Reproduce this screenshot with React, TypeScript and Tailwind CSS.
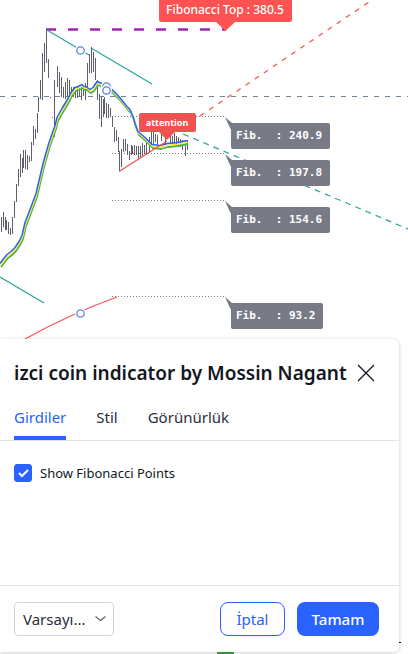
import React, { useState } from "react";

const candles: number[][] = [
  [1, 217, 232], [3, 212, 227], [5, 217, 230], [6, 220, 230], [8, 222, 234], [10, 228, 235], [12, 217, 234],
  [14, 201, 218], [16, 184, 202], [18, 169, 186], [20, 154, 177], [22, 158, 173], [23, 150, 168], [25, 150, 169],
  [27, 155, 170], [29, 156, 162], [31, 142, 161], [33, 126, 145], [35, 129, 139], [37, 113, 133], [38, 97, 112],
  [40, 80, 99], [42, 53, 100], [44, 43, 72], [46, 30, 63], [48, 59, 78], [50, 97, 98], [52, 117, 118], [54, 80, 137],
  [57, 66, 87], [59, 72, 93], [61, 77, 97], [63, 87, 98], [65, 82, 99], [67, 78, 97], [69, 80, 100], [71, 87, 98],
  [73, 87, 97], [75, 89, 98], [77, 87, 98], [79, 88, 97], [81, 86, 100], [83, 87, 96], [85, 83, 100], [87, 63, 90],
  [89, 54, 73], [91, 47, 73], [93, 52, 72], [95, 58, 80], [97, 80, 100], [99, 94, 119], [101, 97, 127],
  [103, 99, 117], [104, 97, 114], [106, 103, 118], [108, 104, 118], [110, 108, 117], [112, 117, 127],
  [114, 127, 142], [116, 130, 141], [118, 137, 152], [119, 151, 171], [121, 149, 167], [123, 139, 152],
  [125, 139, 151], [127, 144, 155], [129, 151, 160], [131, 145, 155], [132, 146, 154], [134, 145, 155],
  [136, 146, 155], [138, 146, 159], [140, 146, 158], [142, 143, 157], [144, 145, 154], [146, 143, 154],
  [149, 137, 153], [151, 132, 147], [153, 132, 145], [155, 134, 142], [157, 135, 145], [161, 134, 141],
  [165, 136, 146], [170, 134, 144], [172, 136, 145], [174, 133, 145], [176, 136, 147], [178, 137, 145],
  [180, 139, 147], [182, 140, 150], [185, 140, 156], [187, 140, 150],
];

const average =
  "M0 263 L3 259 L7 254 L11 251 L15 247 L19 241 L22 235 L25 222 L30 209 L36 193 L43 163 L49 142 L55 125 L57 117 L62 108 L65 103 L68 98 L71 92 L75 87 L78 86 L82 84 L84 86 L86 86 L90 89 L93 87 L97 81 L102 83 L107 86 L112 89 L118 95 L123 101 L127 106 L130 109 L133 116 L135 123 L138 131 L145 137 L152 144 L160 145 L167 143 L177 142 L187 140";

const levels = [
  { y: 117, start: 112, box: 123, width: 99, text: "Fib.  : 240.9" },
  { y: 154, start: 112, box: 160, width: 99, text: "Fib.  : 197.8" },
  { y: 201, start: 112, box: 207, width: 99, text: "Fib.  : 154.6" },
  { y: 297, start: 112, box: 303, width: 92, text: "Fib.  : 93.2" },
];

const handles = [[80, 50], [106, 86], [106, 90], [80, 313]];

function PriceChart() {
  return (
    <svg className="col-start-1 row-start-1 block h-full w-full" role="img" aria-label="Price chart">
      <path d="M0 96.500H2000" stroke="#708596" strokeDasharray="5 6" fill="none" />
      <path d="M46 29.500H226" stroke="#9c27b0" strokeWidth="2.400" strokeDasharray="10 12" />
      <g stroke="#26a69a" strokeWidth="1.200" fill="none">
        <path d="M47 30L89 55M91 48L152 84M0 277L44 303" />
        <path d="M183 134L408 229" strokeDasharray="6 5" />
      </g>
      <path d="M200 116L372 0" stroke="#f05350" strokeWidth="1.200" strokeDasharray="5 6" />
      <path d="M25 339Q70 314 117 297" stroke="#ff5252" strokeWidth="1.200" fill="none" />
      {levels.map((l) => (
        <path key={l.y} d={`M${l.start} ${l.y - 0.5}H225`} stroke="#787b86" strokeDasharray="1 2" />
      ))}
      <g stroke="#5d606b">
        {candles.map(([x, top, bottom]) => (
          <path key={x} d={`M${x + 0.5} ${top}V${bottom}`} />
        ))}
      </g>
      <g fill="none" strokeLinejoin="round">
        <path d={average} stroke="#4caf50" strokeWidth="1.800" transform="translate(1 4)" />
        <path d={average} stroke="#ffeb3b" strokeWidth="1.500" transform="translate(0.500 2.200)" />
        <path d={average} stroke="#2962ff" strokeWidth="1.500" transform="translate(0 0.500)" />
      </g>
      <path d="M119 171.500L167 141" stroke="#f05350" strokeWidth="1.300" />
      {handles.map(([x, y]) => (
        <g key={`${x}-${y}`}>
          <circle cx={x + 0.5} cy={y + 0.5} r="5.500" fill="#fff" />
          <circle cx={x + 0.5} cy={y + 0.5} r="3.700" fill="#fff" stroke="#5b80ee" strokeWidth="1.300" />
        </g>
      ))}
      <path d="M159 -4H292V19.500Q292 22 289 22H235L225.500 31L216 22H162Q159 22 159 19.500Z" fill="#ff5252" />
      <text x="225" y="14" textAnchor="middle" className="fill-white font-['Noto_Sans',sans-serif] text-[12px] font-medium">
        Fibonacci Top : 380.5
      </text>
      <path d="M141 113H194Q196 113 196 115V130Q196 132 194 132H175L167 140L159 132H141Q139 132 139 130V115Q139 113 141 113Z" fill="#ef5350" />
      <text x="167" y="126" textAnchor="middle" className="fill-white font-['Noto_Sans',sans-serif] text-[9px] font-bold">
        attention
      </text>
      {levels.map((l) => (
        <g key={l.y}>
          <path d={`M225 ${l.y}L232 ${l.box}V${l.box + 8}L230 ${l.box + 5}Z`} fill="#787b86" />
          <rect x="231" y={l.box} width={l.width} height="26" rx="2" fill="#787b86" />
          <text x="236" y={l.box + 16} className="fill-white font-['DejaVu_Sans_Mono',monospace] text-[11px] font-bold whitespace-pre">
            {l.text}
          </text>
        </g>
      ))}
      <path d="M394 642.500H2000" stroke="#131722" strokeDasharray="7 8" />
      <rect x="217" y="651" width="17" height="9" rx="2" fill="#43a047" />
    </svg>
  );
}

const tabs = ["Girdiler", "Stil", "Görünürlük"];

export default function App() {
  const [active, setActive] = useState("Girdiler");
  const [shown, setShown] = useState(true);
  return (
    <main className="grid min-h-screen grid-cols-1 overflow-hidden bg-white font-['Noto_Sans',sans-serif] text-[#131722]">
      <PriceChart />
      <section
        role="dialog"
        aria-labelledby="title"
        className="z-10 col-start-1 row-start-1 mr-[9px] mb-0.5 self-end rounded-r-md bg-white shadow-[0_1px_4px_rgba(0,0,0,0.2)]"
      >
        <header className="flex items-center justify-between pt-5 pr-6 pl-3.5">
          <h1 id="title" className="text-[19px] leading-7 font-semibold whitespace-nowrap">
            izci coin indicator by Mossin Nagant
          </h1>
          <button type="button" aria-label="Kapat" className="shrink-0">
            <svg width="18" height="18" viewBox="0 0 18 18" fill="none" stroke="#131722" strokeWidth="1.300">
              <path d="M1 1L17 17M17 1L1 17" />
            </svg>
          </button>
        </header>
        <nav role="tablist" className="mt-[15px] flex gap-[30px] border-b border-[#e0e3eb] px-3.5">
          {tabs.map((tab) => (
            <button
              key={tab}
              type="button"
              role="tab"
              aria-selected={active === tab}
              onClick={() => setActive(tab)}
              className={`h-[38px] border-b-4 pb-1 text-[15px] leading-6 ${
                active === tab ? "border-[#2962ff] text-[#2962ff]" : "border-transparent text-[#2a2e39]"
              }`}
            >
              {tab}
            </button>
          ))}
        </nav>
        <div className="h-36 px-3.5 pt-[23px]">
          <label className="flex items-center gap-2 text-[13px] leading-[18px]">
            <span className="grid size-[18px]">
              <input
                type="checkbox"
                checked={shown}
                onChange={() => setShown(!shown)}
                className="peer col-start-1 row-start-1 size-[18px] appearance-none rounded-[3px] border border-[#2962ff] checked:bg-[#2962ff]"
              />
              <svg
                className="pointer-events-none invisible col-start-1 row-start-1 peer-checked:visible"
                width="18"
                height="18"
                fill="none"
                stroke="#fff"
                strokeWidth="2"
              >
                <path d="M5 9L8 12L14 6" />
              </svg>
            </span>
            Show Fibonacci Points
          </label>
        </div>
        <footer className="flex items-center border-t border-[#e0e3eb] px-3.5 py-4">
          <div className="grid w-[100px] items-center">
            <select
              aria-label="Varsayılanlar"
              className="col-start-1 row-start-1 h-[34px] w-full appearance-none rounded border border-[#d1d4dc] bg-white pl-2 text-[15px] text-[#2a2e39]"
            >
              <option>Varsayı...</option>
            </select>
            <svg
              className="pointer-events-none col-start-1 row-start-1 mr-2 justify-self-end"
              width="11"
              height="6"
              fill="none"
              stroke="#5d606b"
              strokeWidth="1.200"
            >
              <path d="M0.500 0.500L5.500 4.500L10.500 0.500" />
            </svg>
          </div>
          <div className="mr-1.5 ml-auto flex gap-3">
            <button type="button" className="h-[34px] w-[65px] rounded-lg border border-[#2962ff] text-[15px] text-[#2962ff]">
              İptal
            </button>
            <button type="button" className="h-[34px] w-[82px] rounded-lg bg-[#2962ff] text-[15px] font-medium text-white">
              Tamam
            </button>
          </div>
        </footer>
      </section>
    </main>
  );
}
